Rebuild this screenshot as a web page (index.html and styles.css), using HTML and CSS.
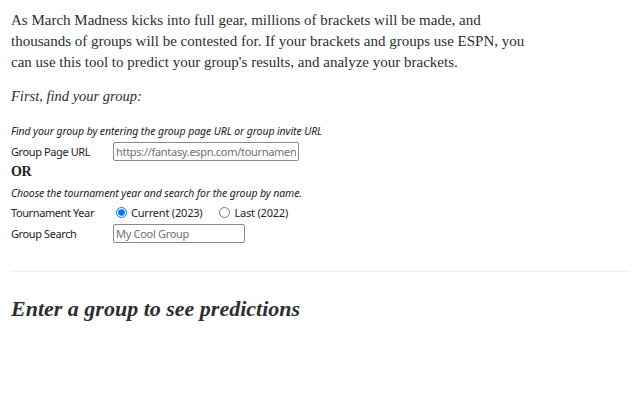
FILE: index.html
```html
<!DOCTYPE html>
<html lang="en">
<head>
  <meta charset="UTF-8" />
  <title>Bracket Predictor</title>
  <link rel="stylesheet" href="styles.css">
</head>
<body>
  <main class="page">
    <p class="intro">As March Madness kicks into full gear, millions of brackets will be made, and thousands of groups will be contested for. If your brackets and groups use ESPN, you can use this tool to predict your group's results, and analyze your brackets.</p>

    <p class="step">First, find your group:</p>

    <form class="finder">
      <p class="hint">Find your group by entering the group page URL or group invite URL</p>
      <div class="row first">
        <label class="label" for="group-url">Group Page URL</label>
        <input class="field url" id="group-url" type="text" placeholder="https://fantasy.espn.com/tournament-challenge-bracket" />
      </div>
      <div class="or">OR</div>
      <p class="hint">Choose the tournament year and search for the group by name.</p>
      <div class="row year">
        <span class="label">Tournament Year</span>
        <label class="radio"><input type="radio" name="year" checked /> Current (2023)</label>
        <label class="radio"><input type="radio" name="year" /> Last (2022)</label>
      </div>
      <div class="row">
        <label class="label" for="group-search">Group Search</label>
        <input class="field search" id="group-search" type="text" placeholder="My Cool Group" />
      </div>
    </form>

    <hr class="divider" />

    <h2 class="empty">Enter a group to see predictions</h2>
  </main>
</body>
</html>
```

FILE: styles.css
```css
* {
  box-sizing: border-box;
}

body {
  margin: 0;
  background: #ffffff;
  color: #2e2e2e;
  font-family: 'Liberation Serif', serif;
}

.page {
  padding: 10px 11px;
}

.intro {
  width: 524px;
  margin: 0;
  font-size: 15px;
  line-height: 21px;
}

.step {
  margin: 13px 0 0 0;
  font-size: 14.5px;
  font-style: italic;
  line-height: 21px;
}

.finder {
  margin-top: 17px;
  font-family: 'Noto Sans', sans-serif;
  font-size: 11px;
  letter-spacing: -0.4px;
  color: #222;
}

.hint {
  margin: 0;
  font-style: italic;
  font-size: 10.5px;
  letter-spacing: -0.1px;
  line-height: 14px;
}

.row {
  display: flex;
  align-items: center;
  height: 21px;
  margin-top: 0;
}

.row.first {
  margin-top: 3px;
}

.row.year {
  margin-top: 2px;
}

.label {
  width: 102px;
  flex: none;
}

.field {
  height: 19px;
  padding: 0 2px;
  border: 1px solid #8a8a8a;
  border-radius: 2px;
  font-family: 'Noto Sans', sans-serif;
  font-size: 11px;
  letter-spacing: -0.3px;
  color: #222;
}

.field::placeholder {
  color: #6f6f6f;
}

.url {
  width: 186px;
}

.search {
  width: 132px;
}

.or {
  font-family: 'Liberation Serif', serif;
  font-weight: bold;
  font-size: 14px;
  line-height: 18px;
  margin-top: 1px;
  margin-bottom: 5px;
}

.radio {
  display: flex;
  align-items: center;
  gap: 4px;
  margin-right: 14px;
  letter-spacing: -0.2px;
}

.radio input {
  margin: 0 0 0 3px;
  width: 11px;
  height: 11px;
}

.divider {
  border: none;
  border-top: 1px solid #efefef;
  margin: 27px 0 0 0;
}

.empty {
  margin: 23px 0 0 0;
  font-size: 22px;
  font-style: italic;
  font-weight: bold;
  line-height: 28px;
}
```
